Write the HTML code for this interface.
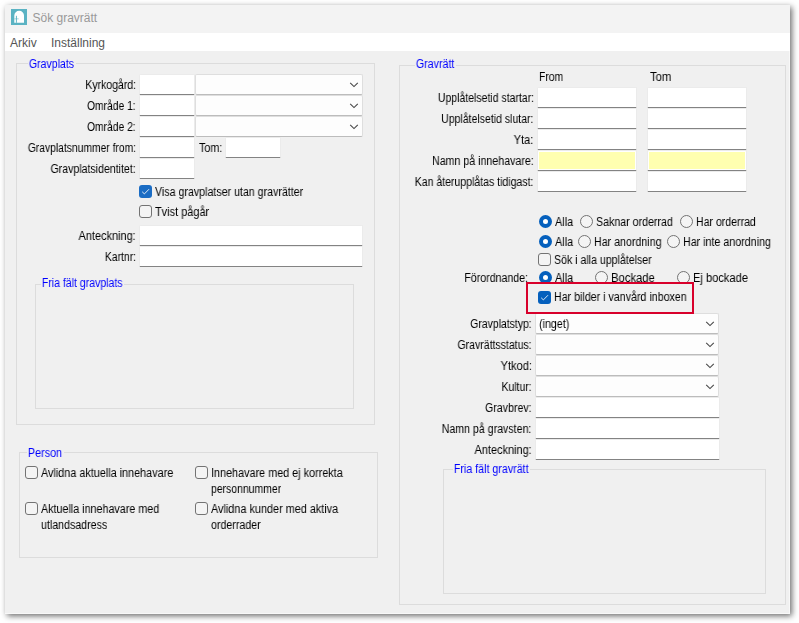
<!DOCTYPE html>
<html lang="sv"><head><meta charset="utf-8"><title>Sök gravrätt</title>
<style>
html,body{margin:0;padding:0;background:#fff;}
body{width:799px;height:623px;position:relative;overflow:hidden;font-family:"Liberation Sans",Arial,sans-serif;font-size:11px;color:#000;}
.win{position:absolute;left:5px;top:5px;width:785px;height:609px;background:#f0f0f0;box-shadow:2px 2px 6px rgba(0,0,0,.58),inset -1px -1px 0 #f8f8f8;}
.tb{position:absolute;left:0;top:0;width:785px;height:28px;background:#f3f3f3;}
.mb{position:absolute;left:0;top:28px;width:785px;height:18px;background:#fff;}
.title{position:absolute;left:27.5px;top:5px;font-size:12px;line-height:16px;color:#999;white-space:nowrap;}
.mi{position:absolute;top:31px;font-size:12px;line-height:15px;color:#555;white-space:nowrap;}
.abs{position:absolute;}
.t{position:absolute;will-change:transform;white-space:nowrap;font-size:12px;line-height:14px;height:14px;z-index:3;}
.t.top{z-index:6;}
.lg{position:absolute;will-change:transform;white-space:nowrap;font-size:12px;line-height:14px;height:14px;background:#f0f0f0;z-index:3;}
.gb{position:absolute;border:1px solid #dcdcdc;box-sizing:border-box;}
.in{position:absolute;box-sizing:border-box;background:#fff;border:1px solid #ebebeb;border-bottom:1px solid #838383;border-radius:1.5px;height:21px;}
.in.y{background:#ffffb0;box-shadow:inset 0 0 0 1px #fff;}
.cb{position:absolute;box-sizing:border-box;background:#fdfdfd;border:1px solid #dedede;border-bottom:1px solid #bcbcbc;border-radius:2px;height:21px;}
.cb svg{position:absolute;right:3px;top:7px;}
.ck{position:absolute;box-sizing:border-box;width:13px;height:13px;border:1px solid #737373;border-radius:3px;background:#f4f4f4;z-index:3;}
.ck.on{border:none;background:#0560bd;}
.ck svg{position:absolute;left:0;top:0;}
.rd{position:absolute;box-sizing:border-box;width:13px;height:13px;border:1px solid #737373;border-radius:50%;background:#f4f4f4;z-index:3;}
.rd.on{border:4px solid #0560bd;background:#fff;}
.cover{position:absolute;background:#f0f0f0;z-index:5;}
.red{position:absolute;box-sizing:border-box;border:2px solid #d8002b;z-index:7;}
</style></head><body>
<div class="win">
<div class="tb"></div>
<svg class="abs" style="left:6px;top:4px" width="16" height="16" viewBox="0 0 16 16"><rect width="16" height="16" fill="#5bb3c3"/><path d="M3.3 13.8V6.6a4.85 4.85 0 0 1 9.7 0v7.2z" fill="#fff"/><rect x="4.9" y="6.8" width="1.1" height="7" fill="#5bb3c3" opacity=".85"/><rect x="3.3" y="9.4" width="4.4" height="0.9" fill="#5bb3c3" opacity=".6"/></svg>
<div class="title">Sök gravrätt</div>
<div class="mb"></div>
<div class="mi" style="left:5px">Arkiv</div>
<div class="mi" style="left:46px">Inställning</div>
</div>

<div class="abs" style="left:0;top:0;width:799px;height:623px;">
<div class="gb" style="left:16px;top:63px;width:359px;height:362px"></div>
<div class="gb" style="left:35px;top:284px;width:319px;height:125px"></div>
<div class="gb" style="left:19px;top:452px;width:359px;height:106px"></div>
<div class="gb" style="left:399px;top:65px;width:387px;height:540px"></div>
<div class="gb" style="left:443px;top:469px;width:323px;height:125px"></div>
<div class="in" style="left:139px;top:74px;width:56px"></div>
<div class="cb" style="left:195px;top:74px;width:168px"><svg width="10" height="6" viewBox="0 0 10 6"><path d="M1.2 0.9L5 4.6 8.8 0.9" fill="none" stroke="#484848" stroke-width="1.1"/></svg></div>
<div class="in" style="left:139px;top:95px;width:56px"></div>
<div class="cb" style="left:195px;top:95px;width:168px"><svg width="10" height="6" viewBox="0 0 10 6"><path d="M1.2 0.9L5 4.6 8.8 0.9" fill="none" stroke="#484848" stroke-width="1.1"/></svg></div>
<div class="in" style="left:139px;top:116px;width:56px"></div>
<div class="cb" style="left:195px;top:116px;width:168px"><svg width="10" height="6" viewBox="0 0 10 6"><path d="M1.2 0.9L5 4.6 8.8 0.9" fill="none" stroke="#484848" stroke-width="1.1"/></svg></div>
<div class="in" style="left:139px;top:137px;width:56px"></div>
<div class="in" style="left:225px;top:137px;width:56px"></div>
<div class="in" style="left:139px;top:158px;width:56px"></div>
<div class="in" style="left:139px;top:225px;width:224px"></div>
<div class="in" style="left:139px;top:246px;width:224px"></div>
<div class="in" style="left:537px;top:87px;width:100px"></div>
<div class="in" style="left:647px;top:87px;width:100px"></div>
<div class="in" style="left:537px;top:108px;width:100px"></div>
<div class="in" style="left:647px;top:108px;width:100px"></div>
<div class="in" style="left:537px;top:129px;width:100px"></div>
<div class="in" style="left:647px;top:129px;width:100px"></div>
<div class="in y" style="left:537px;top:150px;width:100px"></div>
<div class="in y" style="left:647px;top:150px;width:100px"></div>
<div class="in" style="left:537px;top:171px;width:100px"></div>
<div class="in" style="left:647px;top:171px;width:100px"></div>
<div class="cb" style="left:535px;top:313px;width:184px"><svg width="10" height="6" viewBox="0 0 10 6"><path d="M1.2 0.9L5 4.6 8.8 0.9" fill="none" stroke="#484848" stroke-width="1.1"/></svg></div>
<div class="cb" style="left:535px;top:334px;width:184px"><svg width="10" height="6" viewBox="0 0 10 6"><path d="M1.2 0.9L5 4.6 8.8 0.9" fill="none" stroke="#484848" stroke-width="1.1"/></svg></div>
<div class="cb" style="left:535px;top:355px;width:184px"><svg width="10" height="6" viewBox="0 0 10 6"><path d="M1.2 0.9L5 4.6 8.8 0.9" fill="none" stroke="#484848" stroke-width="1.1"/></svg></div>
<div class="cb" style="left:535px;top:376px;width:184px"><svg width="10" height="6" viewBox="0 0 10 6"><path d="M1.2 0.9L5 4.6 8.8 0.9" fill="none" stroke="#484848" stroke-width="1.1"/></svg></div>
<div class="in" style="left:535px;top:397px;width:185px"></div>
<div class="in" style="left:535px;top:418px;width:185px"></div>
<div class="in" style="left:535px;top:439px;width:185px"></div>
<div class="ck on" style="left:139px;top:185px;background:#1a6cc4;"><svg width="13" height="13" viewBox="0 0 13 13"><path d="M3.2 6.8l2.2 2.1 4.6-4.7" fill="none" stroke="#fff" stroke-opacity=".85" stroke-width="1"/></svg></div>
<div class="ck" style="left:139px;top:205px;"></div>
<div class="ck" style="left:25px;top:466px;"></div>
<div class="ck" style="left:25px;top:502px;"></div>
<div class="ck" style="left:195px;top:466px;"></div>
<div class="ck" style="left:195px;top:502px;"></div>
<div class="rd on" style="left:539px;top:215px"></div>
<div class="rd" style="left:580px;top:215px"></div>
<div class="rd" style="left:680px;top:215px"></div>
<div class="rd on" style="left:539px;top:235px"></div>
<div class="rd" style="left:578px;top:235px"></div>
<div class="rd" style="left:667px;top:235px"></div>
<div class="ck" style="left:538px;top:253px;"></div>
<div class="rd on" style="left:539px;top:271px"></div>
<div class="rd" style="left:595px;top:271px"></div>
<div class="rd" style="left:677px;top:271px"></div>
<div class="cover" style="left:528px;top:284px;width:164px;height:28px"></div>
<div class="ck on" style="left:538px;top:291px;z-index:6;"><svg width="13" height="13" viewBox="0 0 13 13"><path d="M3.2 6.8l2.2 2.1 4.6-4.7" fill="none" stroke="#fff" stroke-opacity=".85" stroke-width="1"/></svg></div>
<div class="red" style="left:526px;top:282px;width:168px;height:32px"></div>
<div id="t0" class="t" style="top:77.70px;color:#000;transform:scaleX(0.8737);right:663.30px;transform-origin:100% 0;">Kyrkogård:</div>
<div id="t1" class="t" style="top:98.70px;color:#000;transform:scaleX(0.8589);right:663.30px;transform-origin:100% 0;">Område 1:</div>
<div id="t2" class="t" style="top:119.70px;color:#000;transform:scaleX(0.8589);right:663.30px;transform-origin:100% 0;">Område 2:</div>
<div id="t3" class="t" style="top:140.70px;color:#000;transform:scaleX(0.8585);right:663.30px;transform-origin:100% 0;">Gravplatsnummer from:</div>
<div id="t4" class="t" style="top:161.70px;color:#000;transform:scaleX(0.8809);right:663.30px;transform-origin:100% 0;">Gravplatsidentitet:</div>
<div id="t5" class="t" style="top:140.70px;color:#000;transform:scaleX(0.8918);left:198.50px;transform-origin:0 0;">Tom:</div>
<div id="t6" class="t" style="top:184.70px;color:#000;transform:scaleX(0.8863);left:154.50px;transform-origin:0 0;">Visa gravplatser utan gravrätter</div>
<div id="t7" class="t" style="top:204.70px;color:#000;transform:scaleX(0.9131);left:154.50px;transform-origin:0 0;">Tvist pågår</div>
<div id="t8" class="t" style="top:228.70px;color:#000;transform:scaleX(0.9120);right:663.30px;transform-origin:100% 0;">Anteckning:</div>
<div id="t9" class="t" style="top:249.70px;color:#000;transform:scaleX(0.8663);right:663.30px;transform-origin:100% 0;">Kartnr:</div>
<div id="t10" class="lg" style="top:56.70px;color:#0000ff;transform:scaleX(0.8801);left:28.50px;transform-origin:0 0;padding:0 2px 0 1px;margin-left:-1px;">Gravplats</div>
<div id="t11" class="lg" style="top:275.70px;color:#0000ff;transform:scaleX(0.8767);left:42.00px;transform-origin:0 0;padding:0 2px 0 1px;margin-left:-1px;">Fria fält gravplats</div>
<div id="t12" class="lg" style="top:445.70px;color:#0000ff;transform:scaleX(0.8993);left:27.50px;transform-origin:0 0;padding:0 2px 0 1px;margin-left:-1px;">Person</div>
<div id="t13" class="t" style="top:465.70px;color:#000;transform:scaleX(0.9020);left:40.50px;transform-origin:0 0;">Avlidna aktuella innehavare</div>
<div id="t14" class="t" style="top:501.70px;color:#000;transform:scaleX(0.8948);left:40.50px;transform-origin:0 0;">Aktuella innehavare med</div>
<div id="t15" class="t" style="top:517.70px;color:#000;transform:scaleX(0.8860);left:40.50px;transform-origin:0 0;">utlandsadress</div>
<div id="t16" class="t" style="top:465.70px;color:#000;transform:scaleX(0.9015);left:210.50px;transform-origin:0 0;">Innehavare med ej korrekta</div>
<div id="t17" class="t" style="top:481.70px;color:#000;transform:scaleX(0.8699);left:210.50px;transform-origin:0 0;">personnummer</div>
<div id="t18" class="t" style="top:501.70px;color:#000;transform:scaleX(0.9051);left:210.50px;transform-origin:0 0;">Avlidna kunder med aktiva</div>
<div id="t19" class="t" style="top:517.70px;color:#000;transform:scaleX(0.8870);left:210.50px;transform-origin:0 0;">orderrader</div>
<div id="t20" class="lg" style="top:56.70px;color:#0000ff;transform:scaleX(0.8882);left:416.20px;transform-origin:0 0;padding:0 2px 0 1px;margin-left:-1px;">Gravrätt</div>
<div id="t21" class="t" style="top:69.70px;color:#000;transform:scaleX(0.8643);left:538.50px;transform-origin:0 0;">From</div>
<div id="t22" class="t" style="top:69.70px;color:#000;transform:scaleX(0.9351);left:649.50px;transform-origin:0 0;">Tom</div>
<div id="t23" class="t" style="top:90.70px;color:#000;transform:scaleX(0.8740);right:265.30px;transform-origin:100% 0;">Upplåtelsetid startar:</div>
<div id="t24" class="t" style="top:111.70px;color:#000;transform:scaleX(0.8748);right:265.30px;transform-origin:100% 0;">Upplåtelsetid slutar:</div>
<div id="t25" class="t" style="top:132.70px;color:#000;transform:scaleX(0.9223);right:265.30px;transform-origin:100% 0;">Yta:</div>
<div id="t26" class="t" style="top:153.70px;color:#000;transform:scaleX(0.8863);right:265.30px;transform-origin:100% 0;">Namn på innehavare:</div>
<div id="t27" class="t" style="top:174.70px;color:#000;transform:scaleX(0.8765);right:265.30px;transform-origin:100% 0;">Kan återupplåtas tidigast:</div>
<div id="t28" class="t" style="top:214.70px;color:#000;transform:scaleX(0.9093);left:554.50px;transform-origin:0 0;">Alla</div>
<div id="t29" class="t" style="top:214.70px;color:#000;transform:scaleX(0.8868);left:595.80px;transform-origin:0 0;">Saknar orderrad</div>
<div id="t30" class="t" style="top:214.70px;color:#000;transform:scaleX(0.8790);left:696.30px;transform-origin:0 0;">Har orderrad</div>
<div id="t31" class="t" style="top:234.70px;color:#000;transform:scaleX(0.9093);left:554.50px;transform-origin:0 0;">Alla</div>
<div id="t32" class="t" style="top:234.70px;color:#000;transform:scaleX(0.8874);left:594.20px;transform-origin:0 0;">Har anordning</div>
<div id="t33" class="t" style="top:234.70px;color:#000;transform:scaleX(0.8903);left:683.30px;transform-origin:0 0;">Har inte anordning</div>
<div id="t34" class="t" style="top:252.70px;color:#000;transform:scaleX(0.8823);left:554.00px;transform-origin:0 0;">Sök i alla upplåtelser</div>
<div id="t35" class="t" style="top:270.70px;color:#000;transform:scaleX(0.8841);right:271.30px;transform-origin:100% 0;">Förordnande:</div>
<div id="t36" class="t" style="top:270.70px;color:#000;transform:scaleX(0.9093);left:554.50px;transform-origin:0 0;">Alla</div>
<div id="t37" class="t" style="top:270.70px;color:#000;transform:scaleX(0.9378);left:610.90px;transform-origin:0 0;">Bockade</div>
<div id="t38" class="t" style="top:270.70px;color:#000;transform:scaleX(0.9263);left:692.70px;transform-origin:0 0;">Ej bockade</div>
<div id="t39" class="t top" style="top:289.70px;color:#000;transform:scaleX(0.8881);left:554.00px;transform-origin:0 0;">Har bilder i vanvård inboxen</div>
<div id="t40" class="t" style="top:316.70px;color:#000;transform:scaleX(0.8691);right:267.30px;transform-origin:100% 0;">Gravplatstyp:</div>
<div id="t41" class="t top" style="top:316.70px;color:#000;transform:scaleX(0.8908);left:538.90px;transform-origin:0 0;">(inget)</div>
<div id="t42" class="t" style="top:337.70px;color:#000;transform:scaleX(0.8760);right:267.30px;transform-origin:100% 0;">Gravrättsstatus:</div>
<div id="t43" class="t" style="top:358.70px;color:#000;transform:scaleX(0.9242);right:267.30px;transform-origin:100% 0;">Ytkod:</div>
<div id="t44" class="t" style="top:379.70px;color:#000;transform:scaleX(0.8706);right:267.30px;transform-origin:100% 0;">Kultur:</div>
<div id="t45" class="t" style="top:400.70px;color:#000;transform:scaleX(0.8864);right:267.30px;transform-origin:100% 0;">Gravbrev:</div>
<div id="t46" class="t" style="top:421.70px;color:#000;transform:scaleX(0.8847);right:267.30px;transform-origin:100% 0;">Namn på gravsten:</div>
<div id="t47" class="t" style="top:442.70px;color:#000;transform:scaleX(0.9120);right:267.30px;transform-origin:100% 0;">Anteckning:</div>
<div id="t48" class="lg" style="top:461.70px;color:#0000ff;transform:scaleX(0.8890);left:453.50px;transform-origin:0 0;padding:0 2px 0 1px;margin-left:-1px;">Fria fält gravrätt</div>
</div>
</body></html>
